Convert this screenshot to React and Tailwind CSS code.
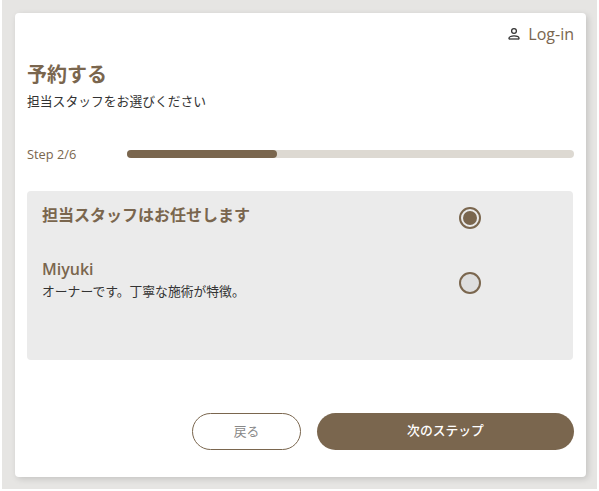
import React from 'react'

const font = { fontFamily: '"Open Sans", "Noto Sans CJK JP", sans-serif' }

const StaffRow = ({ name, note, selected, className, radioClass }) => (
  <div className={`flex items-start ${className}`}>
    <div className="w-[417px] shrink-0">
      <p className="text-[16px] leading-[22px] font-semibold text-[#7a664e]">{name}</p>
      {note && <p className="text-[12.8px] leading-[16px] text-[#333] mt-[3px]">{note}</p>}
    </div>
    <div className={`w-[22px] h-[22px] rounded-full border-2 border-[#7a664e] flex items-center justify-center ${radioClass} ${selected ? 'bg-[#ebebeb]' : 'bg-[#dedede]'}`}>
      {selected && <div className="w-[14px] h-[14px] rounded-full bg-[#7a664e]" />}
    </div>
  </div>
)

export default function App() {
  return (
    <div style={font} className="w-[599px] h-[491px] overflow-hidden bg-white pl-[2px]">
      <div className="w-[595px] h-[489px] overflow-hidden bg-[#e6e5e3] pl-[13px] pt-[13px]">
        <div className="w-[571px] h-[464px] bg-white rounded-[4px] shadow-[2px_2px_6px_rgba(0,0,0,0.15)] pl-[12px] pr-[12px] flex flex-col">
          <div className="flex items-center justify-end gap-[6px] h-[18px] mt-[12px]">
            <svg width="16" height="16" viewBox="0 0 24 24" fill="none" stroke="#333" strokeWidth="1.9">
              <circle cx="12" cy="7.5" r="3.6" />
              <path d="M4.500 20v-1.500c0-2.300 3.700-3.800 7.500-3.800s7.500 1.500 7.500 3.800V20" />
              <path d="M4.500 19.500h15" />
            </svg>
            <span className="text-[16px] leading-[18px] text-[#7a664e]">Log-in</span>
          </div>
          <h1 className="text-[20px] leading-[28px] font-bold text-[#7a664e] mt-[18px]">予約する</h1>
          <p className="text-[12.8px] leading-[16px] text-[#333] mt-[4px]">担当スタッフをお選びください</p>
          <div className="flex items-center mt-[37px] h-[16px]">
            <span className="w-[100px] shrink-0 text-[12.8px] leading-[16px] text-[#7a664e]">Step 2/6</span>
            <div className="w-[447px] h-[8px] rounded-full bg-[#ddd9d2]">
              <div className="w-[150px] h-[8px] rounded-full bg-[#7a664e]" />
            </div>
          </div>
          <div className="w-[546px] h-[169px] mt-[29px] rounded-[4px] bg-[#ebebeb] px-[15px] pt-[13px]">
            <StaffRow name="担当スタッフはお任せします" selected radioClass="mt-[3px]" />
            <StaffRow name="Miyuki" note="オーナーです。丁寧な施術が特徴。" className="mt-[29px]" radioClass="mt-[14px]" />
          </div>
          <div className="flex justify-end gap-[16px] mt-[53px]">
            <button className="w-[109px] h-[37px] rounded-full border border-[#7a664e] bg-white text-[12.8px] text-[#888]">戻る</button>
            <button className="w-[257px] h-[37px] rounded-full bg-[#7a664e] text-[12.8px] font-medium text-white pb-[2px]">次のステップ</button>
          </div>
        </div>
      </div>
    </div>
  )
}
